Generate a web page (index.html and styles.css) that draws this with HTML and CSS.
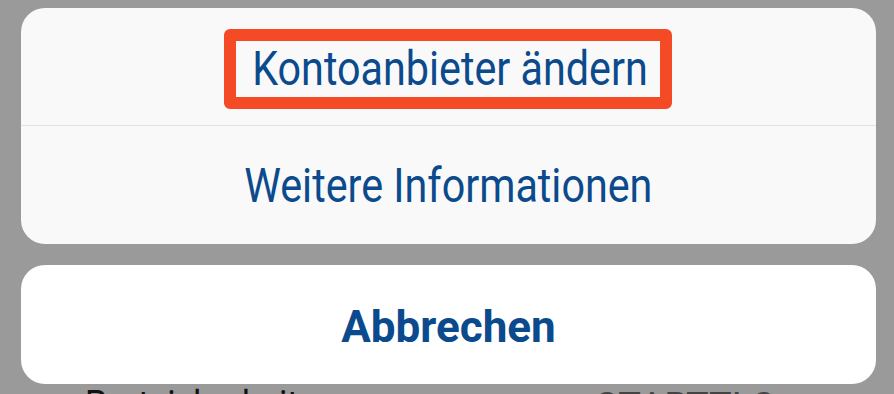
FILE: index.html
```html
<!DOCTYPE html>
<html lang="de">
<head>
<meta charset="utf-8">
<link rel="stylesheet" href="styles.css">
</head>
<body>
<div class="sheet">
  <div class="card group">
    <div class="action first">
      <span class="highlight"><span class="label">Kontoanbieter ändern</span></span>
    </div>
    <div class="action second">
      <span class="label">Weitere Informationen</span>
    </div>
  </div>
  <div class="card cancel">
    <span class="label bold">Abbrechen</span>
  </div>
  <div class="behind">
    <span class="behind-left">Portsicherheit</span>
    <span class="behind-right">STARTTLS<span class="chev">›</span></span>
  </div>
</div>
</body>
</html>
```
FILE: styles.css
```css
html, body {
  margin: 0;
  padding: 0;
  width: 894px;
  height: 394px;
  overflow: hidden;
  background: #9a9a9a;
  font-family: Roboto, "Liberation Sans", sans-serif;
}
.sheet {
  padding: 8px 18px 0 21px;
  display: flex;
  flex-direction: column;
}
.card {
  border-radius: 24px;
  overflow: hidden;
}
.group {
  background: #f9f9f9;
  height: 236px;
  display: flex;
  flex-direction: column;
}
.action {
  display: flex;
  align-items: center;
  justify-content: center;
}
.first {
  height: 117px;
  border-bottom: 1px solid #e2e2e2;
}
.second {
  flex: 1;
}
.label {
  display: inline-block;
  color: #0b4a8c;
  font-size: 48px;
  line-height: 56px;
  white-space: nowrap;
  transform: scaleX(0.86);
}
.second .label {
  margin-top: 2px;
}
.bold {
  font-weight: 700;
  font-size: 44px;
  transform: none;
  margin-top: 4px;
}
.highlight {
  display: flex;
  justify-content: center;
  width: 424px;
  border: 12px solid #f44a26;
  border-radius: 6px;
  margin-top: 4px;
  margin-left: -2px;
}
.highlight .label {
  margin-left: 4px;
}
.cancel {
  margin-top: 21px;
  background: #ffffff;
  height: 119px;
  display: flex;
  align-items: center;
  justify-content: center;
}
.behind {
  display: flex;
  justify-content: space-between;
  padding: 0 70px 0 64px;
  font-size: 38px;
  line-height: 38px;
  height: 10px;
  overflow: hidden;
  margin-top: 2px;
}
.behind-left {
  display: inline-block;
  color: #111;
  transform: scaleX(0.9);
  transform-origin: left center;
}
.behind-right {
  display: inline-block;
  color: #444;
  white-space: nowrap;
}
.chev {
  color: #666;
  margin-left: 18px;
  font-size: 44px;
}
```
